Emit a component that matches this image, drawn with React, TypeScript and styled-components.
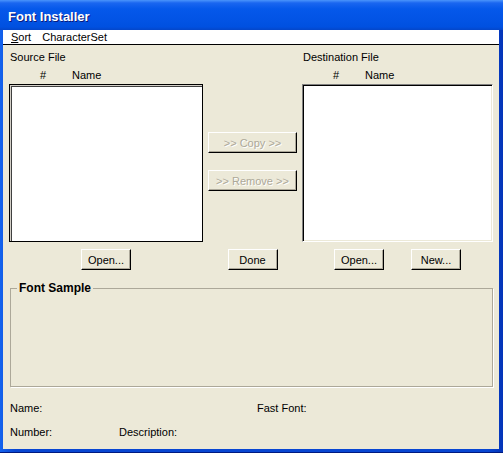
import styled, { createGlobalStyle } from 'styled-components';

const GlobalStyle = createGlobalStyle`
  body {
    margin: 0;
    font-family: 'Liberation Sans', Arial, sans-serif;
    font-size: 11px;
    color: #000;
  }
`;

const FontInstaller = () => {
  return (
    <Window>
      <TitleBar>Font Installer</TitleBar>
      <Client>
        <MenuBar>
          <MenuItem>
            <u>S</u>ort
          </MenuItem>
          <MenuItem>CharacterSet</MenuItem>
        </MenuBar>
        <Columns>
          <FileColumn>
            <Label>Source File</Label>
            <ListHeader>
              <HashCol>#</HashCol>
              <span>Name</span>
            </ListHeader>
            <ListBox focused />
            <ButtonRow>
              <Button>Open...</Button>
            </ButtonRow>
          </FileColumn>
          <MiddleColumn>
            <Button wide disabled>
              &gt;&gt; Copy &gt;&gt;
            </Button>
            <Button wide disabled>
              &gt;&gt; Remove &gt;&gt;
            </Button>
            <DoneRow>
              <Button>Done</Button>
            </DoneRow>
          </MiddleColumn>
          <FileColumn narrow>
            <Label>Destination File</Label>
            <ListHeader>
              <HashCol>#</HashCol>
              <span>Name</span>
            </ListHeader>
            <ListBox />
            <ButtonRow>
              <Button>Open...</Button>
              <Button>New...</Button>
            </ButtonRow>
          </FileColumn>
        </Columns>
        <SampleGroup>
          <SampleLegend>Font Sample</SampleLegend>
        </SampleGroup>
        <InfoGrid>
          <span>Name:</span>
          <span />
          <span>Fast Font:</span>
          <span>Number:</span>
          <span>Description:</span>
          <span />
        </InfoGrid>
      </Client>
    </Window>
  );
};

const App = () => (
  <>
    <GlobalStyle />
    <FontInstaller />
  </>
);

const Window = styled.div`
  width: 503px;
  height: 453px;
  display: flex;
  flex-direction: column;
  background: linear-gradient(90deg, #1463ee 0%, #0846d2 3%, #0846d2 97%, #0434b8 100%);
  box-shadow: inset 0 -1px 0 #001a80;
`;

const TitleBar = styled.div`
  height: 30px;
  flex: none;
  display: flex;
  align-items: center;
  padding: 2px 0 0 8px;
  box-sizing: border-box;
  font-size: 13px;
  font-weight: bold;
  color: #fff;
  text-shadow: 1px 1px 0 #0a1a7a;
  background: linear-gradient(
    180deg,
    #4a94fb 0%,
    #1a66f0 10%,
    #0558ea 30%,
    #0253e4 70%,
    #0050e0 90%,
    #0446c9 100%
  );
`;

const Client = styled.div`
  flex: 1;
  margin: 0 4px 4px 3px;
  display: flex;
  flex-direction: column;
  background: #ece9d8;
`;

const MenuBar = styled.div`
  height: 14px;
  display: flex;
  align-items: center;
  gap: 11px;
  padding-left: 8px;
  background: #fff;
  border-bottom: 1px solid #000;
`;

const MenuItem = styled.span`
  line-height: 14px;
`;

const Columns = styled.div`
  display: flex;
  gap: 5px;
  padding: 6px 0 0 6px;
`;

const FileColumn = styled.div<{ narrow?: boolean }>`
  width: ${(p) => (p.narrow ? 191 : 194)}px;
  display: flex;
  flex-direction: column;
`;

const Label = styled.div`
  line-height: 13px;
  padding-left: 1px;
`;

const ListHeader = styled.div`
  display: flex;
  line-height: 13px;
  margin-top: 5px;
  padding-left: 31px;
`;

const HashCol = styled.span`
  width: 32px;
`;

const ListBox = styled.div<{ focused?: boolean }>`
  height: 158px;
  margin-top: 2px;
  box-sizing: border-box;
  background: #fff;
  ${(p) =>
    p.focused
      ? `
    border: 1px solid #000;
    box-shadow: inset 1px 1px 0 #d4d0c8, inset 2px 2px 0 #404040;
  `
      : `
    border: 1px solid;
    border-color: #808080 #fff #fff #808080;
    box-shadow: inset 1px 1px 0 #000, inset -1px -1px 0 #ece9d8;
  `}
`;

const ButtonRow = styled.div`
  display: flex;
  justify-content: center;
  gap: 27px;
  margin-top: 7px;
`;

const MiddleColumn = styled.div`
  width: 89px;
  display: flex;
  flex-direction: column;
  align-items: center;
  gap: 17px;
  padding-top: 81px;
`;

const DoneRow = styled.div`
  margin-top: auto;
`;

const Button = styled.button<{ wide?: boolean }>`
  width: ${(p) => (p.wide ? 89 : 50)}px;
  height: 21px;
  padding: 0;
  font-family: 'Liberation Sans', Arial, sans-serif;
  font-size: 11px;
  color: #000;
  background: #ece9d8;
  border: 1px solid;
  border-color: #fff #000 #000 #fff;
  box-shadow: inset -1px -1px 0 #aca899;
  border-radius: 0;

  &:disabled {
    color: #aca899;
    text-shadow: 1px 1px 0 #fff;
  }
`;

const SampleGroup = styled.fieldset`
  margin: 11px 6px 0 7px;
  padding: 0 6px;
  height: 104px;
  border: 1px solid #aca899;
  box-shadow: 1px 1px 0 #fff;
  min-width: 0;
`;

const SampleLegend = styled.legend`
  padding: 0 2px;
  font-size: 12px;
  font-weight: bold;
  line-height: 14px;
`;

const InfoGrid = styled.div`
  display: grid;
  grid-template-columns: 109px 138px auto;
  row-gap: 11px;
  line-height: 13px;
  margin: 15px 0 0 7px;
`;

export default App;
